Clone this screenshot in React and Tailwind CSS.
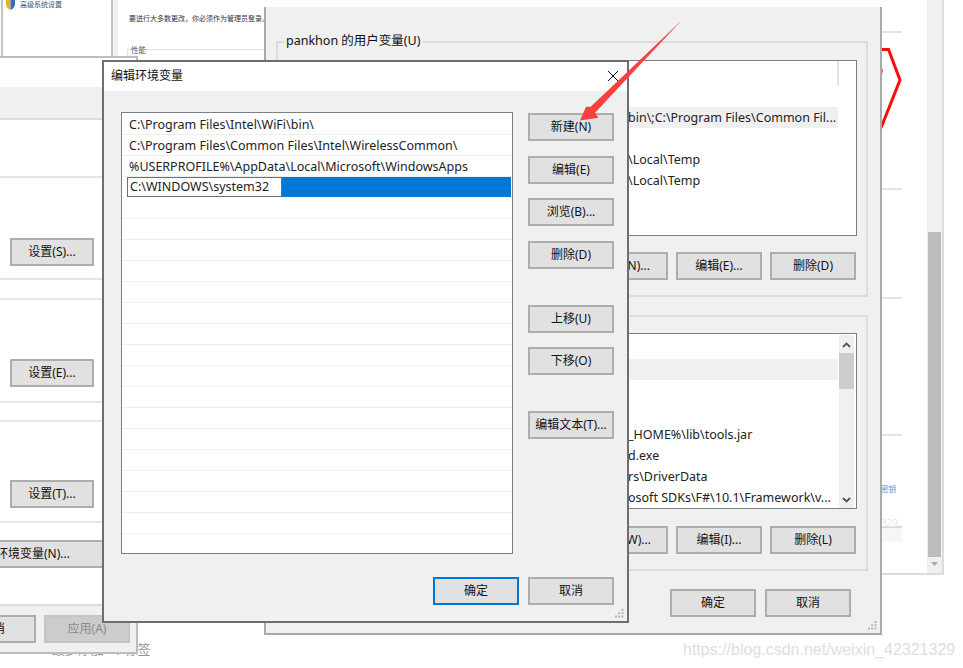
import React from 'react';

const winFont = { fontFamily: '"Noto Sans", "Noto Sans CJK SC", sans-serif' };

function Btn({ children, w = 'w-[86px]', tone = 'bg-[#e1e1e1] border-[#adadad] text-[#111]', className = '' }) {
  return (
    <div className={`${w} h-[28px] shrink-0 flex items-center justify-center border-2 text-[12px] whitespace-nowrap ${tone} ${className}`}>
      {children}
    </div>
  );
}

function Grip() {
  return (
    <svg className="absolute right-[3px] bottom-[3px]" width="9" height="9" viewBox="0 0 9 9" fill="#b5b5b5">
      <rect x="6.5" y="0" width="2" height="2" />
      <rect x="3.2" y="3.2" width="2" height="2" />
      <rect x="6.5" y="3.2" width="2" height="2" />
      <rect x="0" y="6.5" width="2" height="2" />
      <rect x="3.2" y="6.5" width="2" height="2" />
      <rect x="6.5" y="6.5" width="2" height="2" />
    </svg>
  );
}

function Row({ text, selected = false, pad = 'pt-[2px]' }) {
  return (
    <div className={`h-[21px] w-[547px] pl-[337px] flex items-center whitespace-nowrap overflow-hidden text-[12.5px] text-[#222] ${pad} ${selected ? 'bg-[#f0f0f0]' : ''}`}>
      {text}
    </div>
  );
}

function BackPage() {
  return (
    <div className="absolute left-0 top-0 w-[963px] h-[668px] bg-white">
      {/* far right web page */}
      <div className="absolute left-[881px] top-0 w-[63px] h-[575px] border-r-2 border-b-2 border-[#dcdcdc] bg-white">
        <div className="absolute left-0 top-[31px] w-[21px] border-t-2 border-[#e4e4e4]" />
        <div className="absolute left-0 top-[188px] w-[21px] border-t-2 border-[#e4e4e4]" />
        <div className="absolute left-0 top-[297px] w-[21px] border-t-2 border-[#e4e4e4]" />
        <div className="absolute left-0 top-[434px] w-[21px] border-t-2 border-[#e4e4e4]" />
        <div className="absolute left-0 top-[526px] w-[21px] h-[16px] border-t-2 border-[#d8d8d8] bg-[#f6f6f6]" />
        <div className="absolute left-0 top-[481px] text-[7.5px] leading-[16px] text-[#4a8fe0]">密钥</div>
        <div className="absolute left-0 top-[515px] text-[10px] leading-[16px] text-[#e8e8e8]">329</div>
        <div className="absolute left-[46px] top-0 w-[15px] h-[573px] bg-[#f0f0f0]">
          <div className="absolute left-[1px] top-[232px] w-[13px] h-[325px] bg-[#bcbcbc]" />
          <svg className="absolute left-[3px] top-[561px]" width="9" height="6" viewBox="0 0 9 6" fill="#a8a8a8">
            <path d="M1 1h7L4.500 5z" />
          </svg>
        </div>
      </div>
      <svg className="absolute left-[881px] top-[44px]" width="24" height="90" viewBox="0 0 24 90" fill="none">
        <path d="M0 5.500H7.500L19 36L0 84" stroke="#ff0a0a" strokeWidth="3" />
        <path d="M0 26L2 25L1 31H0z" fill="#ff0a0a" />
      </svg>

      {/* settings window */}
      <div className="absolute left-[1px] top-0 w-[112px] h-[56px] border-l-2 border-r-2 border-[#c4c4c4] bg-white">
        <div className="flex items-start gap-[5px] pl-[3px]">
          <svg width="9" height="10" viewBox="0 0 9 10">
            <path d="M0 0H4.500V10C2 9 0 7 0 4z" fill="#e8b130" />
            <path d="M4.500 0H9V4C9 7 7 9 4.500 10z" fill="#3a6fb5" />
          </svg>
          <span className="text-[7px] leading-[9px] text-[#34587f]">高级系统设置</span>
        </div>
      </div>
      <div className="absolute left-[113px] top-0 w-[152px] h-[60px] pl-[5px] bg-[#f0f0f0]">
        <div className="relative w-[147px] h-[60px] bg-white overflow-hidden">
          <div className="absolute left-[11px] top-[11px] w-[140px] whitespace-nowrap text-[7px] leading-[16px] text-[#333]">要进行大多数更改，你必须作为管理员登录。</div>
          <div className="absolute left-[9px] top-[49px] w-[140px] h-[12px] border-t border-l border-[#e0e0e0]" />
          <div className="absolute left-[13px] top-[43px] bg-white text-[7.5px] leading-[14px] text-[#555]">性能</div>
        </div>
      </div>
      <div className="absolute left-[52px] top-[640px] text-[13px] leading-[18px] text-[#8f959c]">最多添加5个标签</div>
      <div className="absolute left-[683px] top-[639px] text-[16px] leading-[22px] text-[#dedede]" style={{ fontFamily: '"Liberation Sans", sans-serif' }}>
        https://blog.csdn.net/weixin_42321329
      </div>
    </div>
  );
}

function EnvWindow() {
  return (
    <div className="absolute left-[264px] top-0 w-[618px] h-[635px] bg-[#f0f0f0] border-l-2 border-r-2 border-b-2 border-[#a9a9a9]">
      <div className="h-[7px] -ml-[2px] -mr-[2px] bg-white" />
      <div className="ml-[10px] mt-[34px] w-[592px] h-[256px] border-2 border-[#dcdcdc] relative pl-[12px] pt-[17px]">
        <div className="absolute left-[6px] -top-[11px] bg-[#f0f0f0] px-[2px] text-[12.5px] leading-[18px] text-[#111]">pankhon 的用户变量(U)</div>
        <div className="w-[567px] h-[176px] border border-[#7a7f86] bg-white overflow-hidden">
          <div className="h-[25px] w-[548px] border-r-2 border-[#e5e5e5]" />
          <Row text="" />
          <Row text="bin\;C:\Program Files\Common Fil..." selected />
          <Row text="" />
          <Row text="\Local\Temp" />
          <Row text="\Local\Temp" />
        </div>
        <div className="flex justify-end gap-[8px] mt-[16px] w-[566px]">
          <Btn>新建(N)...</Btn>
          <Btn>编辑(E)...</Btn>
          <Btn>删除(D)</Btn>
        </div>
      </div>
      <div className="ml-[10px] mt-[18px] w-[592px] h-[256px] border-2 border-[#dcdcdc] pl-[12px] pt-[16px]">
        <div className="w-[567px] h-[176px] border border-[#7a7f86] bg-white flex overflow-hidden">
          <div className="w-[547px]">
            <div className="h-[25px]" />
            <Row text="" selected />
            <Row text="" />
            <Row text="" />
            <Row text="_HOME%\lib\tools.jar" pad="pt-[5px]" />
            <Row text="d.exe" pad="pt-[5px]" />
            <Row text="rs\DriverData" pad="pt-[5px]" />
            <Row text="osoft SDKs\F#\10.1\Framework\v..." pad="pt-[5px]" />
          </div>
          <div className="ml-[1px] w-[15px] h-[173px] my-[1px] bg-[#f0f0f0] flex flex-col items-center">
            <svg className="mt-[7px]" width="9" height="6" viewBox="0 0 9 6" fill="none">
              <path d="M1 5L4.500 1.500L8 5" stroke="#555" strokeWidth="1.800" />
            </svg>
            <div className="mt-[5px] w-[15px] h-[36px] bg-[#cdcdcd]" />
            <svg className="mt-[108px]" width="9" height="6" viewBox="0 0 9 6" fill="none">
              <path d="M1 1L4.500 4.500L8 1" stroke="#555" strokeWidth="1.800" />
            </svg>
          </div>
        </div>
        <div className="flex justify-end gap-[8px] mt-[17px] w-[566px]">
          <Btn>新建(W)...</Btn>
          <Btn>编辑(I)...</Btn>
          <Btn>删除(L)</Btn>
        </div>
      </div>
      <div className="flex justify-end gap-[9px] mt-[18px] pr-[29px]">
        <Btn>确定</Btn>
        <Btn>取消</Btn>
      </div>
      <Grip />
    </div>
  );
}

function LeftDialog() {
  return (
    <div className="absolute left-0 top-[56px] w-[138px] h-[598px] bg-white border-t-2 border-r-2 border-b-2 border-[#bdbdbd] flex flex-col">
      <div className="h-[29px] shrink-0" />
      <div className="h-[33px] shrink-0 bg-[#f0f0f0] border-b-2 border-[#dcdcdc]" />
      <div className="h-[58px] shrink-0 border-b-2 border-[#e6e6e6]" />
      <div className="h-[102px] shrink-0 border-b-2 border-[#e6e6e6] flex items-end pl-[10px] pb-[12px]"><Btn w="w-[84px]">设置(S)...</Btn></div>
      <div className="h-[18px] shrink-0" />
      <div className="h-[105px] shrink-0 border-t-2 border-b-2 border-[#e6e6e6] flex items-end pl-[10px] pb-[14px]"><Btn w="w-[84px]">设置(E)...</Btn></div>
      <div className="h-[17px] shrink-0" />
      <div className="h-[103px] shrink-0 border-t-2 border-b-2 border-[#e6e6e6] flex items-end pl-[10px] pb-[13px]"><Btn w="w-[84px]">设置(T)...</Btn></div>
      <div className="-ml-[65px] mt-[17px]">
        <Btn w="w-[172px]">系统环境变量(N)...</Btn>
      </div>
      <div className="mt-[36px] flex-1 bg-[#f0f0f0] border-t-2 border-[#dcdcdc] flex justify-end gap-[8px] pt-[9px] pr-[6px]">
        <Btn>取消</Btn>
        <Btn tone="bg-[#cccccc] border-[#c4c4c4] text-[#8a8a8a]">应用(A)</Btn>
      </div>
    </div>
  );
}

function EditDialog() {
  const rows = [
    'C:\\Program Files\\Intel\\WiFi\\bin\\',
    'C:\\Program Files\\Common Files\\Intel\\WirelessCommon\\',
    '%USERPROFILE%\\AppData\\Local\\Microsoft\\WindowsApps',
  ];
  const blank = Array.from({ length: 17 });
  return (
    <div className="absolute left-[102px] top-[60px] w-[527px] h-[563px] border-2 border-[#6e6e6e] bg-[#f0f0f0]">
      <div className="h-[29px] bg-white flex items-center justify-between pl-[7px] pr-[8px] pb-[2px] text-[12px] text-[#111]">
        <span>编辑环境变量</span>
        <svg width="12" height="12" viewBox="0 0 12 12" stroke="#111" strokeWidth="1" fill="none">
          <path d="M1 1L11 11M11 1L1 11" />
        </svg>
      </div>
      <div className="flex pl-[17px] pt-[21px]">
        <div className="w-[392px] h-[442px] border border-[#7a7f86] bg-white overflow-hidden pt-[1px]">
          {rows.map((r) => (
            <div key={r} className="h-[21px] border-b border-[#eeeeee] pl-[7px] pt-[3px] flex items-center whitespace-nowrap text-[12.5px] text-[#222]">{r}</div>
          ))}
          <div className="h-[21px] ml-[5px] mr-[1px] bg-[#0078d7] border-b border-white">
            <div className="w-[155px] h-[20px] bg-white border border-[#6e6e6e] pl-[2px] flex items-center text-[12.5px] text-[#222]">C:\WINDOWS\system32</div>
          </div>
          {blank.map((_, i) => (
            <div key={i} className="h-[21px] border-b border-[#eeeeee]" />
          ))}
        </div>
        <div className="ml-[15px] flex flex-col">
          <Btn className="mt-[1px]">新建(N)</Btn>
          <Btn className="mt-[15px]">编辑(E)</Btn>
          <Btn className="mt-[14px]">浏览(B)...</Btn>
          <Btn className="mt-[15px]">删除(D)</Btn>
          <Btn className="mt-[36px]">上移(U)</Btn>
          <Btn className="mt-[14px]">下移(O)</Btn>
          <Btn className="mt-[36px]">编辑文本(T)...</Btn>
        </div>
      </div>
      <div className="flex justify-end gap-[9px] pr-[13px] mt-[23px]">
        <Btn tone="bg-[#e1e1e1] border-[#0078d7] text-[#111]">确定</Btn>
        <Btn>取消</Btn>
      </div>
      <Grip />
    </div>
  );
}

export default function App() {
  return (
    <div className="relative w-[963px] h-[668px] overflow-hidden bg-white" style={winFont}>
      <BackPage />
      <EnvWindow />
      <LeftDialog />
      <EditDialog />
      {/* red annotation arrow */}
      <svg className="absolute left-0 top-0 pointer-events-none" width="963" height="668" viewBox="0 0 963 668">
        <path d="M682 20L590.700 106.700L586 106.700L580 120.500L598.300 117.700L595 112.700Z" fill="#f9403f" />
      </svg>
    </div>
  );
}
